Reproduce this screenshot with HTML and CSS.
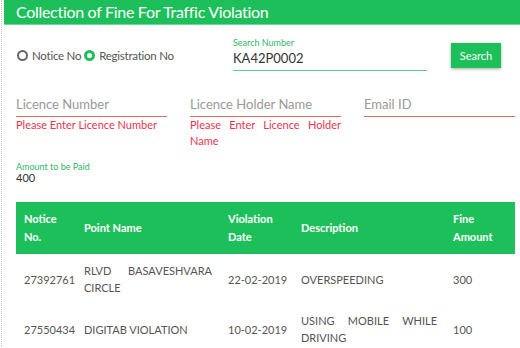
FILE: index.html
```html
<!DOCTYPE html>
<html>
<head>
<meta charset="utf-8">
<link rel="stylesheet" href="styles.css">
</head>
<body>
<div class="page">
  <div class="titlebar">Collection of Fine For Traffic Violation</div>
  <div class="search-row">
    <div class="radios">
      <span class="radio"></span><span class="rlabel">Notice No</span>
      <span class="radio on"></span><span class="rlabel">Registration No</span>
    </div>
    <div class="search-field">
      <div class="flabel">Search Number</div>
      <div class="fvalue">KA42P0002</div>
    </div>
    <div class="btn">Search</div>
  </div>
  <div class="fields">
    <div class="field">
      <div class="ph">Licence Number</div>
      <div class="err">Please Enter Licence Number</div>
    </div>
    <div class="field">
      <div class="ph">Licence Holder Name</div>
      <div class="err">Please Enter Licence Holder Name</div>
    </div>
    <div class="field">
      <div class="ph">Email ID</div>
    </div>
  </div>
  <div class="amount">
    <div class="flabel">Amount to be Paid</div>
    <div class="amt">400</div>
  </div>
  <table class="grid">
    <colgroup>
      <col class="c1"><col class="c2"><col class="c3"><col class="c4"><col class="c5">
    </colgroup>
    <thead>
      <tr><th>Notice No.</th><th>Point Name</th><th>Violation Date</th><th>Description</th><th>Fine Amount</th></tr>
    </thead>
    <tbody>
      <tr><td>27392761</td><td class="j">RLVD BASAVESHVARA CIRCLE</td><td class="nw">22-02-2019</td><td class="j">OVERSPEEDING</td><td>300</td></tr>
      <tr><td>27550434</td><td class="j">DIGITAB VIOLATION</td><td class="nw">10-02-2019</td><td class="j">USING MOBILE WHILE DRIVING</td><td>100</td></tr>
    </tbody>
  </table>
</div>
</body>
</html>
```
FILE: styles.css
```css
html, body { margin: 0; padding: 0; background: #fff; }
body { font-family: Lato, "Open Sans", sans-serif; color: #444; overflow: hidden; }
.page {
  margin-left: 1px;
  border-left: 1px dotted #c8c8c8;
  padding-left: 2px;
  min-height: 348px;
}
.titlebar {
  background: #1dbf5a;
  color: #fff;
  font-size: 16px;
  height: 24px;
  line-height: 24px;
  padding-left: 12px;
  border-bottom: 1px solid #6fd699;
  letter-spacing: -0.3px;
}
.search-row {
  display: flex;
  align-items: flex-start;
  padding: 12px 0 0 13px;
  height: 44px;
}
.radios {
  display: flex;
  align-items: center;
  margin-top: 12px;
  width: 216px;
  font-size: 11.5px;
  letter-spacing: -0.25px;
  color: #555;
}
.radio {
  width: 7px; height: 7px;
  border: 2px solid #666;
  border-radius: 50%;
  margin-right: 4px;
}
.radio.on { border: 3px solid #1dbf5a; width: 5px; height: 5px; margin-left: 3px; }
.search-field {
  width: 194px;
  border-bottom: 1px solid #5ccf8a;
  padding-bottom: 3px;
}
.flabel { font-size: 9px; color: #2fb865; line-height: 11px; }
.fvalue { font-size: 13px; color: #333; line-height: 18px; margin-top: 1px; }
.btn {
  margin-left: 24px;
  margin-top: 6px;
  width: 50px; height: 25px;
  background: #1dbf5a;
  color: #fff;
  font-size: 11px;
  line-height: 25px;
  text-align: center;
  box-shadow: 0 1px 3px rgba(0,0,0,0.35);
}
.fields {
  display: flex;
  gap: 23px;
  padding: 13px 0 0 12px;
  height: 78px;
  box-sizing: border-box;
}
.field { width: 151px; }
.ph {
  font-size: 13px;
  color: #999;
  line-height: 20px;
  border-bottom: 1.5px solid #e06a6a;
  padding-bottom: 2px;
}
.err {
  font-size: 11px;
  color: #e8334f;
  line-height: 16px;
  margin-top: 0;
  text-align: justify;
}
.amount { padding: 2px 0 0 12px; }
.amt { font-size: 11px; color: #333; line-height: 12px; }
.grid {
  margin: 18px 0 0 12px;
  width: 499px;
  border-collapse: collapse;
  table-layout: fixed;
  font-size: 11px;
}
.c1 { width: 60px; } .c2 { width: 144px; } .c3 { width: 73px; } .c4 { width: 152px; } .c5 { width: 70px; }
.grid th {
  background: #1dbf5a;
  color: #fff;
  font-weight: bold;
  text-align: left;
  line-height: 18px;
  padding: 8px 8px;
  height: 35px;
  vertical-align: middle;
}
.grid td {
  color: #555;
  line-height: 17px;
  padding: 8px;
  height: 34px;
  vertical-align: middle;
}
.grid td.j { text-align: justify; }
.grid td.nw { white-space: nowrap; }
```
